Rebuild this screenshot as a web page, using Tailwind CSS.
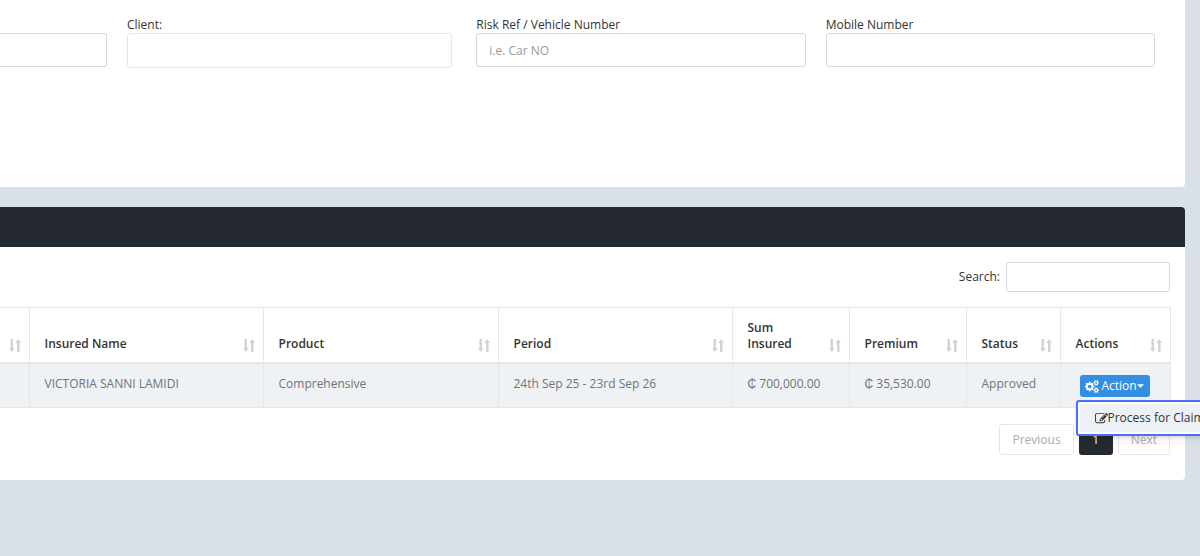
<!DOCTYPE html>
<html lang="en">
<head>
    <meta charset="UTF-8">
    <meta name="viewport" content="width=device-width, initial-scale=1.0">
    <title>Policies</title>
    <script src="https://cdn.jsdelivr.net/npm/@tailwindcss/browser@4"></script>
</head>
<body class="min-h-screen overflow-x-hidden bg-[#d9e0e7] font-['Open_Sans',sans-serif] text-xs text-[#333]">
    <!-- Icons shared by the table -->
    <svg class="hidden">
        <symbol id="icon-sort" viewBox="0 0 12 13">
            <path fill="currentColor" d="M1.500 0h2.500v9h1.800L2.800 13 0 9h1.500zM8 13V4H6.200L9.200 0 12 4h-1.500v9z"/>
        </symbol>
        <symbol id="icon-cogs" viewBox="0 0 1920 1792">
            <path fill="currentColor" d="M896 896q0-106-75-181t-181-75-181 75-75 181 75 181 181 75 181-75 75-181zm768 512q0-52-38-90t-90-38-90 38-38 90q0 53 37.5 90.5t90.5 37.500 90.5-37.500 37.500-90.500zm0-1024q0-52-38-90t-90-38-90 38-38 90q0 53 37.500 90.500t90.500 37.500 90.500-37.500 37.500-90.500zm-384 421v185q0 10-7 19.500t-16 10.500l-155 24q-11 35-32 76 34 48 90 115 7 11 7 20 0 12-7 19-23 30-82.500 89.500t-78.500 59.500q-11 0-21-7l-115-90q-37 19-77 31-11 108-23 155-7 24-30 24h-186q-11 0-20-7.500t-10-17.500l-23-153q-34-10-75-31l-118 89q-7 7-20 7-11 0-21-8-144-133-144-160 0-9 7-19 10-14 41-53t47-61q-23-44-35-82l-152-24q-10-1-17-9.500t-7-19.500v-185q0-10 7-19.500t16-10.500l155-24q11-35 32-76-34-48-90-115-7-11-7-20 0-12 7-20 22-30 82-89t79-59q11 0 21 7l115 90q34-18 77-32 11-108 23-154 7-24 30-24h186q11 0 20 7.500t10 17.500l23 153q34 10 75 31l118-89q8-7 20-7 11 0 21 8 144 133 144 160 0 8-7 19-12 16-42 54t-45 60q23 48 34 82l152 23q10 2 17 10.500t7 19.500zm640 533v140q0 16-149 31-12 27-30 52 51 113 51 138 0 4-4 7-122 71-124 71-8 0-46-47t-52-68q-20 2-30 2t-30-2q-14 21-52 68t-46 47q-2 0-124-71-4-3-4-7 0-25 51-138-18-25-30-52-149-15-149-31v-140q0-16 149-31 13-29 30-52-51-113-51-138 0-4 4-7 4-2 35-20t59-34 30-16q8 0 46 46.500t52 67.500q20-2 30-2t30 2q51-71 92-112l6-2q4 0 124 70 4 3 4 7 0 25-51 138 17 23 30 52 149 15 149 31zm0-1024v140q0 16-149 31-12 27-30 52 51 113 51 138 0 4-4 7-122 71-124 71-8 0-46-47t-52-68q-20 2-30 2t-30-2q-14 21-52 68t-46 47q-2 0-124-71-4-3-4-7 0-25 51-138-18-25-30-52-149-15-149-31v-140q0-16 149-31 13-29 30-52-51-113-51-138 0-4 4-7 4-2 35-20t59-34 30-16q8 0 46 46.500t52 67.500q20-2 30-2t30 2q51-71 92-112l6-2q4 0 124 70 4 3 4 7 0 25-51 138 17 23 30 52 149 15 149 31z"/>
        </symbol>
        <symbol id="icon-edit" viewBox="0 0 1792 1792">
            <path fill="currentColor" d="M888 1184l116-116-152-152-116 116v56h96v96h56zm440-720q-16-16-33 1l-350 350q-17 17-1 33t33-1l350-350q17-17 1-33zm80 594v190q0 119-84.500 203.500t-203.500 84.500h-832q-119 0-203.500-84.500t-84.500-203.500v-832q0-119 84.500-203.500t203.500-84.500h832q63 0 117 25 15 7 18 23 3 17-9 29l-49 49q-14 14-32 8-23-6-45-6h-832q-66 0-113 47t-47 113v832q0 66 47 113t113 47h832q66 0 113-47t47-113v-126q0-13 9-22l64-64q15-15 35-7t20 29zm-96-738l288 288-672 672h-288v-288zm444 132l-92 92-288-288 92-92q28-28 68-28t68 28l152 152q28 28 28 68t-28 68z"/>
        </symbol>
    </svg>

    <main class="space-y-5 pr-[15px]">
        <!-- Filters -->
        <form class="grid grid-cols-[107px_1fr_1fr_1fr] items-start gap-x-5 rounded-br bg-white pt-[17px] pr-[30px] pb-[119px]">
            <div class="pt-4">
                <input type="text" aria-label="Policy" class="block h-[34px] w-full rounded-r-[3px] border border-l-0 border-[#d3d8de] px-3">
            </div>
            <div class="pr-1">
                <label for="client" class="block leading-4">Client:</label>
                <input type="text" id="client" class="block h-[35px] w-full rounded-[3px] border border-[#e2e7eb] px-3">
            </div>
            <div>
                <label for="riskRef" class="block leading-4">Risk Ref / Vehicle Number</label>
                <input type="text" id="riskRef" placeholder="i.e. Car NO" class="block h-[34px] w-full rounded-[3px] border border-[#d3d8de] px-3 placeholder:text-[#999]">
            </div>
            <div>
                <label for="mobile" class="block leading-4">Mobile Number</label>
                <input type="text" id="mobile" class="block h-[34px] w-full rounded-[3px] border border-[#d3d8de] px-3">
            </div>
        </form>

        <!-- Results -->
        <section class="rounded-r bg-white">
            <div class="h-10 rounded-tr bg-[#242a30]"></div>
            <div class="pt-[15px] pr-[15px] pb-[25px]">
                <div class="mb-[15px] flex items-center justify-end gap-[6px]">
                    <label for="search">Search:</label>
                    <input type="search" id="search" class="h-[30px] w-[164px] rounded-[3px] border border-[#d3d8de] px-2">
                </div>

                <table class="w-full table-fixed border-collapse border border-l-0 border-[#e2e7eb] text-left leading-4">
                    <colgroup>
                        <col class="w-[29px]">
                        <col class="w-[234px]">
                        <col class="w-[235px]">
                        <col class="w-[234px]">
                        <col class="w-[117px]">
                        <col class="w-[117px]">
                        <col class="w-[94px]">
                        <col class="w-[110px]">
                    </colgroup>
                    <thead>
                        <tr class="border-b-2 border-[#e2e7eb] align-bottom">
                            <th class="pt-3 pr-2 pb-[10px]"><svg class="ml-auto h-[13px] w-3 text-[#d3d3d3]"><use href="#icon-sort"/></svg></th>
                            <th class="border-l border-[#e2e7eb] pt-3 pr-2 pb-[10px] pl-[15px] font-semibold"><div class="flex items-end justify-between">Insured Name<svg class="h-[13px] w-3 text-[#d3d3d3]"><use href="#icon-sort"/></svg></div></th>
                            <th class="border-l border-[#e2e7eb] pt-3 pr-2 pb-[10px] pl-[15px] font-semibold"><div class="flex items-end justify-between">Product<svg class="h-[13px] w-3 text-[#d3d3d3]"><use href="#icon-sort"/></svg></div></th>
                            <th class="border-l border-[#e2e7eb] pt-3 pr-2 pb-[10px] pl-[15px] font-semibold"><div class="flex items-end justify-between">Period<svg class="h-[13px] w-3 text-[#d3d3d3]"><use href="#icon-sort"/></svg></div></th>
                            <th class="border-l border-[#e2e7eb] pt-3 pr-2 pb-[10px] pl-[15px] font-semibold"><div class="flex items-end justify-between">Sum<br>Insured<svg class="h-[13px] w-3 text-[#d3d3d3]"><use href="#icon-sort"/></svg></div></th>
                            <th class="border-l border-[#e2e7eb] pt-3 pr-2 pb-[10px] pl-[15px] font-semibold"><div class="flex items-end justify-between">Premium<svg class="h-[13px] w-3 text-[#d3d3d3]"><use href="#icon-sort"/></svg></div></th>
                            <th class="border-l border-[#e2e7eb] pt-3 pr-2 pb-[10px] pl-[15px] font-semibold"><div class="flex items-end justify-between">Status<svg class="h-[13px] w-3 text-[#d3d3d3]"><use href="#icon-sort"/></svg></div></th>
                            <th class="border-l border-[#e2e7eb] pt-3 pr-2 pb-[10px] pl-[15px] font-semibold"><div class="flex items-end justify-between">Actions<svg class="h-[13px] w-3 text-[#d3d3d3]"><use href="#icon-sort"/></svg></div></th>
                        </tr>
                    </thead>
                    <tbody>
                        <tr class="bg-[#eef2f5] align-top text-[#707478]">
                            <td></td>
                            <td class="border-l border-[#e2e7eb] pt-3 pl-[15px]">VICTORIA SANNI LAMIDI</td>
                            <td class="border-l border-[#e2e7eb] pt-3 pl-[15px]">Comprehensive</td>
                            <td class="border-l border-[#e2e7eb] pt-3 pl-[15px]">24th Sep 25 - 23rd Sep 26</td>
                            <td class="border-l border-[#e2e7eb] pt-3 pl-[15px]">₵ 700,000.00</td>
                            <td class="border-l border-[#e2e7eb] pt-3 pl-[15px]">₵ 35,530.00</td>
                            <td class="border-l border-[#e2e7eb] pt-3 pl-[15px]">Approved</td>
                            <td class="border-l border-[#e2e7eb] pt-[11px] pb-[10px] pl-[15px]">
                                <div class="relative ml-1 w-[70px]">
                                    <button type="button" class="flex h-[22px] w-full items-center justify-center rounded-[3px] bg-[#348fe2] text-white">
                                        <svg class="mr-[2px] h-[13px] w-[14px]"><use href="#icon-cogs"/></svg>Action<svg class="h-1 w-[7px]" viewBox="0 0 8 4"><path fill="currentColor" d="M0 0h8L4 4z"/></svg>
                                    </button>
                                    <div class="absolute top-[25px] -left-1 z-10 w-[162px] rounded-[3px] border-2 border-[#4f6ef7] bg-white p-[2px] shadow-md">
                                        <a href="#" class="flex h-7 items-center bg-[#edf0f5] pl-[15px] whitespace-nowrap text-[#333]">
                                            <svg class="h-[13px] w-[13px] shrink-0"><use href="#icon-edit"/></svg>Process for Claim
                                        </a>
                                    </div>
                                </div>
                            </td>
                        </tr>
                    </tbody>
                </table>

                <nav class="mt-4 flex justify-end gap-[5px]" aria-label="Pagination">
                    <button type="button" class="h-[31px] rounded-[3px] border border-[#e2e7eb] px-3 text-[#aaa]">Previous</button>
                    <button type="button" class="h-[31px] w-[34px] rounded-[3px] bg-[#242a30] text-white">1</button>
                    <button type="button" class="h-[31px] rounded-[3px] border border-[#e2e7eb] px-3 text-[#aaa]">Next</button>
                </nav>
            </div>
        </section>
    </main>
</body>
</html>
